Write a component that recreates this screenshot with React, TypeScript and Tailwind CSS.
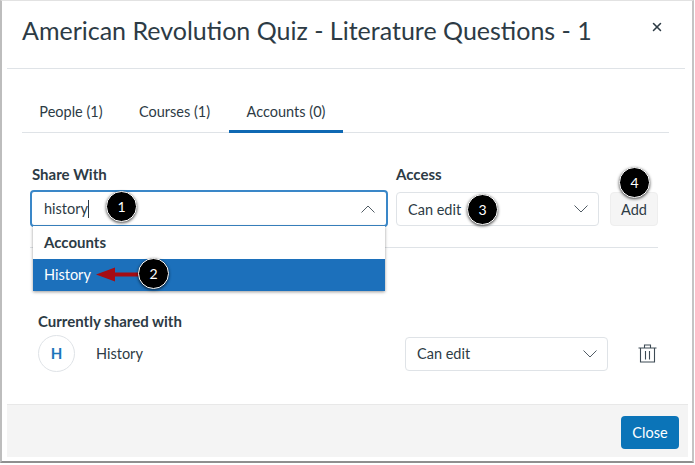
import { X } from 'lucide-react'

// numbered black callout that sits over the screenshot
function Callout({ n, className }: { n: number; className: string }) {
  return (
    <span className={`absolute flex h-[31px] w-[31px] items-center justify-center rounded-full border border-white bg-black text-[14px] text-white shadow-[0_1px_3px_rgba(0,0,0,0.7)] ${className}`}>
      {n}
    </span>
  )
}

function Chevron({ up }: { up?: boolean }) {
  return (
    <svg width="14" height="8" viewBox="0 0 14 8" fill="none" stroke="#3d4a54" strokeWidth="0.9">
      <path d={up ? 'M0.5 7.5 L7 1 L13.5 7.5' : 'M0.5 0.5 L7 7 L13.5 0.5'} />
    </svg>
  )
}

function AccessSelect({ className }: { className: string }) {
  return (
    <div className={`flex h-[34px] items-center justify-between rounded-[4px] border border-[#dfe3e7] bg-white pl-[11px] pr-[10px] text-[14.5px] text-[#2d3b45] ${className}`}>
      <span className="pt-px">Can edit</span>
      <Chevron />
    </div>
  )
}

export default function App() {
  return (
    <div className="h-[465px] w-[695px] overflow-hidden bg-white font-['Lato',sans-serif] text-[#2d3b45]">
      <div className="relative flex h-[463px] w-[694px] flex-col border-r-2 border-b-2 border-l-2 border-t border-r-[#c4c4c4] border-b-[#8f8f8f] border-l-[#bdbdbd] border-t-[#e2e2e2] pl-[5px] pr-[4px]">
        {/* header */}
        <div className="mr-[3px] flex h-[68px] items-start justify-between border-b border-[#dfe3e7] pl-[15px] pr-[21px] pt-[10px]">
          <h1 className="text-[25px] leading-[38px] text-[#2d3b45]">American Revolution Quiz - Literature Questions - 1</h1>
          <X className="mt-[9px] h-[14px] w-[14px]" strokeWidth={2.6} />
        </div>

        {/* tabs */}
        <div className="ml-[15px] mr-[19px] mt-[25px] flex h-[39px] items-start border-b border-[#dfe3e7] text-[14.5px]">
          <div className="flex h-[39px] w-[98px] justify-center pt-[8px] leading-[20px]">People (1)</div>
          <div className="flex h-[39px] w-[109px] justify-center pt-[8px] leading-[20px]">Courses (1)</div>
          <div className="flex h-[39px] w-[114px] justify-center border-b-[3px] border-[#0e68b3] pt-[8px] leading-[20px]">Accounts (0)</div>
        </div>

        {/* share form */}
        <div className="relative ml-[23px] mr-[30px] mt-[31px] border-b border-[#dfe3e7] pb-[20px]">
          <div className="flex items-end">
            <div className="w-[358px]">
              <div className="mb-[6px] ml-[2px] text-[15px] font-bold leading-[20px]">Share With</div>
              <div className="relative flex h-[37px] items-center justify-between rounded-[4px] border-2 border-[#3a87c8] bg-white pl-[12px] pr-[11px] pt-px text-[14.5px]">
                <span className="border-r border-[#2d3b45] leading-[18px]">history</span>
                <Chevron up />
                <Callout n={1} className="left-[74px] top-[-1px]" />
              </div>
            </div>
            <div className="ml-[8px] w-[203px]">
              <div className="mb-[8px] text-[15px] font-bold leading-[20px]">Access</div>
              <div className="relative mb-px">
                <AccessSelect className="w-full" />
                <Callout n={3} className="left-[71px] top-[2px]" />
              </div>
            </div>
            <div className="relative mb-px ml-[11px] flex h-[34px] w-[48px] items-center justify-center rounded-[4px] border border-[#eeeeee] bg-[#f5f5f5] pt-px text-[14.5px]">
              Add
              <Callout n={4} className="left-[8px] top-[-26px]" />
            </div>
          </div>

          {/* open dropdown */}
          <div className="absolute left-[3px] top-[62px] z-10 w-[352px] bg-white shadow-[0_1px_3px_rgba(0,0,0,0.4)]">
            <div className="flex h-[33px] items-center pl-[11px] text-[15px] font-bold">Accounts</div>
            <div className="relative flex h-[32px] items-center bg-[#1c70bb] pl-[11px] text-[14.5px] text-white">
              History
              <svg className="absolute left-[63px] top-[8px]" width="44" height="15" viewBox="0 0 44 15">
                <path d="M0 7.5 L19 0.5 V5.5 H44 V9.5 H19 V14.5 Z" fill="#a50c14" />
              </svg>
              <Callout n={2} className="left-[105px] top-[-1px]" />
            </div>
          </div>
        </div>

        {/* currently shared */}
        <div className="ml-[31px] mr-[30px] mt-[63px] flex-1">
          <div className="text-[15px] font-bold leading-[20px]">Currently shared with</div>
          <div className="mt-[4px] flex items-center">
            <div className="flex h-[37px] w-[37px] items-center justify-center rounded-full border border-[#dfe3e7] text-[15px] font-bold text-[#1c76bb]">H</div>
            <span className="ml-[21px] flex-1 pt-px text-[14.5px]">History</span>
            <AccessSelect className="w-[203px]" />
            <svg className="ml-[30px] mr-[1px]" width="19" height="19" viewBox="0 0 19 19" fill="none" stroke="#3d4a54" strokeWidth="1.1">
              <path d="M0.5 4 H18.5 M6.5 4 V1 H12.5 V4 M2.5 4 V18 H16.5 V4 M7.5 7 V15.5 M11.5 7 V15.5" />
            </svg>
          </div>
        </div>

        {/* footer */}
        <div className="mb-[4px] flex h-[53px] items-center justify-end border-t border-[#e8e8e8] bg-[#f4f4f4] pr-[9px] pt-[3px]">
          <div className="flex h-[33px] w-[58px] items-center justify-center rounded-[4px] bg-[#0b74b8] text-[14.5px] text-white">Close</div>
        </div>
      </div>
    </div>
  )
}
